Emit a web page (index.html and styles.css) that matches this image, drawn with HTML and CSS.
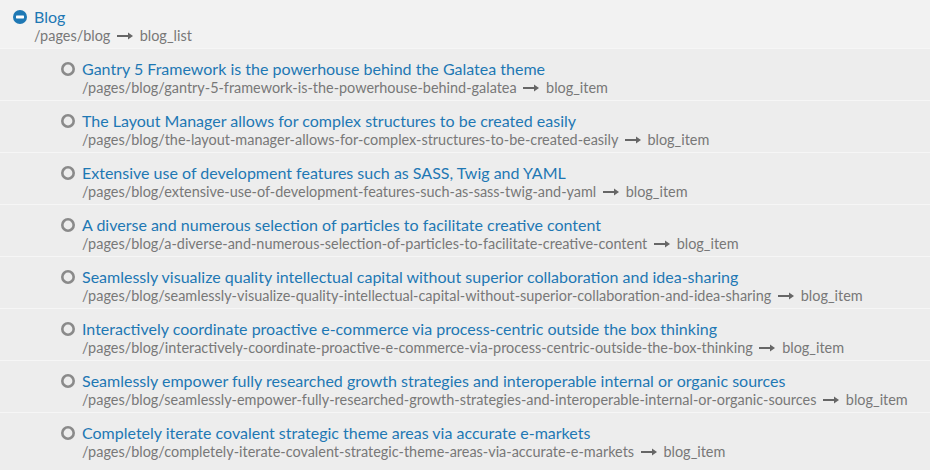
FILE: index.html
```html
<!DOCTYPE html>
<html>
<head>
<meta charset="utf-8">
<link rel="stylesheet" href="styles.css">
</head>
<body>
<div class="tree">
  <div class="node parent">
    <svg class="ico" width="14" height="14" viewBox="0 0 14 14"><circle cx="7" cy="7" r="7" fill="#1e78b4"/><rect x="3" y="5.6" width="8" height="2.8" rx="0.6" fill="#fff"/></svg>
    <div class="info">
      <div class="title">Blog</div>
      <div class="path">/pages/blog <svg class="arr" width="16" height="8" viewBox="0 0 16 8"><rect x="0" y="3" width="12" height="2" fill="#666"/><path d="M11 0.5 L16 4 L11 7.5 Z" fill="#666"/></svg> blog_list</div>
    </div>
  </div>
  <div class="children" id="children"></div>
</div>
<script src="app.js"></script>
</body>
</html>
```
FILE: app.js
```js
var items = [
 ["Gantry 5 Framework is the powerhouse behind the Galatea theme","gantry-5-framework-is-the-powerhouse-behind-galatea"],
 ["The Layout Manager allows for complex structures to be created easily","the-layout-manager-allows-for-complex-structures-to-be-created-easily"],
 ["Extensive use of development features such as SASS, Twig and YAML","extensive-use-of-development-features-such-as-sass-twig-and-yaml"],
 ["A diverse and numerous selection of particles to facilitate creative content","a-diverse-and-numerous-selection-of-particles-to-facilitate-creative-content"],
 ["Seamlessly visualize quality intellectual capital without superior collaboration and idea-sharing","seamlessly-visualize-quality-intellectual-capital-without-superior-collaboration-and-idea-sharing"],
 ["Interactively coordinate proactive e-commerce via process-centric outside the box thinking","interactively-coordinate-proactive-e-commerce-via-process-centric-outside-the-box-thinking"],
 ["Seamlessly empower fully researched growth strategies and interoperable internal or organic sources","seamlessly-empower-fully-researched-growth-strategies-and-interoperable-internal-or-organic-sources"],
 ["Completely iterate covalent strategic theme areas via accurate e-markets","completely-iterate-covalent-strategic-theme-areas-via-accurate-e-markets"]
];
var html = "";
items.forEach(function(it){
  html += '<div class="node child">' +
    '<svg class="ico" width="14" height="14" viewBox="0 0 14 14"><circle cx="7" cy="7" r="5.7" fill="none" stroke="#8a8a8a" stroke-width="2.6"/></svg>' +
    '<div class="info"><div class="title">' + it[0] + '</div>' +
    '<div class="path">/pages/blog/' + it[1] + ' <svg class="arr" width="16" height="8" viewBox="0 0 16 8"><rect x="0" y="3" width="12" height="2" fill="#666"/><path d="M11 0.5 L16 4 L11 7.5 Z" fill="#666"/></svg> blog_item</div></div></div>';
});
document.getElementById("children").innerHTML = html;
```
FILE: styles.css
```css
html, body { margin: 0; padding: 0; background: #ededed; }
body { font-family: Lato, "Open Sans", sans-serif; width: 930px; height: 470px; overflow: hidden; }
.tree { display: flex; flex-direction: column; }
.node { display: flex; align-items: flex-start; }
.parent { background: #f2f2f2; padding: 7px 0 3px 13px; height: 38px; }
.children { background: #ededed; }
.child { padding: 10px 0 3px 61px; height: 38px; border-top: 1px solid #f6f6f6; }
.ico { flex: none; margin-top: 3px; margin-right: 7px; }
.info { display: flex; flex-direction: column; }
.title { font-size: 16px; line-height: 20px; color: #1e78b4; white-space: nowrap; }
.path { font-size: 14.45px; line-height: 18px; color: #787878; white-space: nowrap; }
.arr { vertical-align: 1px; margin: 0 3px; }
```
